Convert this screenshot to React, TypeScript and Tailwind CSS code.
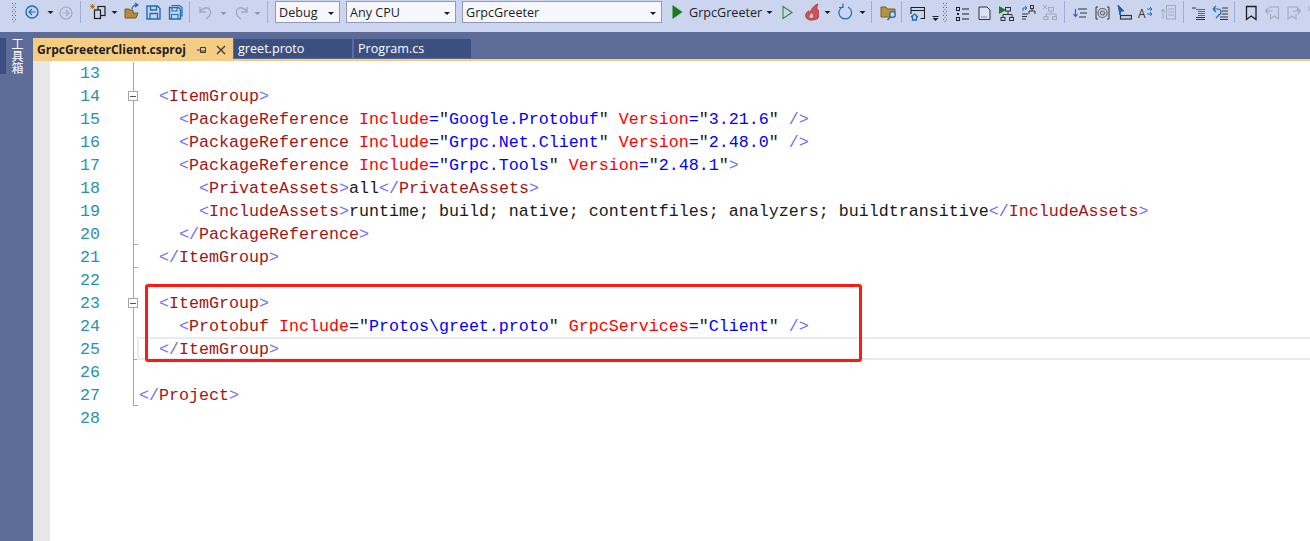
import React from "react";

const S = ({ w, className = "", children }: { w: number; className?: string; children?: React.ReactNode }) => (
  <svg width={w} height={32} viewBox={`0 0 ${w} 32`} fill="none" className={"shrink-0 block " + className}>
    {children}
  </svg>
);
const Sep = ({ className = "" }: { className?: string }) => <div className={"w-px h-[22px] mt-[-8px] bg-[#9fb0d4] shrink-0 " + className} />;
const Grip = ({ className = "" }: { className?: string }) => (
  <S w={5} className={className}>
    {[3, 7, 11, 15, 19].map((y) => (
      <g key={y} fill="#5a6478">
        <rect x={0} y={y} width={1} height={1} />
        <rect x={3} y={y} width={1} height={1} />
        <rect x={1.5} y={y + 2} width={1} height={1} />
      </g>
    ))}
  </S>
);
const Caret = ({ className = "" }: { className?: string }) => (
  <S w={7} className={className}>
    <path d="M0.5 11h6l-3 3z" fill="#1e1e1e" />
  </S>
);
const CaretOff = ({ className = "" }: { className?: string }) => (
  <S w={7} className={className}>
    <path d="M0.5 12h6l-3 3z" fill="#8d94a8" />
  </S>
);

type Seg = [string, string];
const t = "text-[#6e6eff]";
const n = "text-[#a31515]";
const a = "text-[#ff0000]";
const q = "text-[#0000ff]";
const k = "text-[#1a1a1a]";
const tag = (s: string): Seg[] => [[t, "<"], [n, s]];
const attr = (name: string, val: string): Seg[] => [[n, " "], [a, name], [q, "="], [k, "\""], [q, val], [k, "\""]];

const rows: { no: number; seg?: Seg[]; box?: boolean; tick?: boolean; end?: boolean; cur?: boolean; noLine?: boolean }[] = [
  { no: 13 },
  { no: 14, box: true, seg: [[k, "  "], ...tag("ItemGroup"), [t, ">"]] },
  { no: 15, seg: [[k, "    "], ...tag("PackageReference"), ...attr("Include", "Google.Protobuf"), ...attr("Version", "3.21.6"), [k, " "], [t, "/>"]] },
  { no: 16, seg: [[k, "    "], ...tag("PackageReference"), ...attr("Include", "Grpc.Net.Client"), ...attr("Version", "2.48.0"), [k, " "], [t, "/>"]] },
  { no: 17, seg: [[k, "    "], ...tag("PackageReference"), ...attr("Include", "Grpc.Tools"), ...attr("Version", "2.48.1"), [t, ">"]] },
  { no: 18, seg: [[k, "      "], ...tag("PrivateAssets"), [t, ">"], [k, "all"], [t, "</"], [n, "PrivateAssets"], [t, ">"]] },
  { no: 19, seg: [[k, "      "], ...tag("IncludeAssets"), [t, ">"], [k, "runtime; build; native; contentfiles; analyzers; buildtransitive"], [t, "</"], [n, "IncludeAssets"], [t, ">"]] },
  { no: 20, tick: true, seg: [[k, "    "], [t, "</"], [n, "PackageReference"], [t, ">"]] },
  { no: 21, tick: true, seg: [[k, "  "], [t, "</"], [n, "ItemGroup"], [t, ">"]] },
  { no: 22 },
  { no: 23, box: true, seg: [[k, "  "], ...tag("ItemGroup"), [t, ">"]] },
  { no: 24, seg: [[k, "    "], ...tag("Protobuf"), ...attr("Include", "Protos\\greet.proto"), ...attr("GrpcServices", "Client"), [k, " "], [t, "/>"]] },
  { no: 25, tick: true, cur: true, seg: [[k, "  "], [t, "</"], [n, "ItemGroup"], [t, ">"]] },
  { no: 26 },
  { no: 27, tick: true, end: true, seg: [[t, "</"], [n, "Project"], [t, ">"]] },
  { no: 28, noLine: true },
];

const Combo = ({ label, className }: { label: string; className: string }) => (
  <div className={"h-[22px] mt-[-8px] shrink-0 bg-[#f5f7fd] border border-[#8e9ab8] flex items-center justify-between pl-[3px] pr-[5px] " + className}>
    <span className="mt-[2px]">{label}</span>
    <span className="w-0 h-0 mt-[2px] border-x-[3px] border-x-transparent border-t-[3px] border-t-[#1e1e1e]" />
  </div>
);

export default function App() {
  return (
    <div className="w-[1310px] h-[541px] overflow-hidden flex flex-col bg-white font-['Open_Sans','Noto_Sans',sans-serif] text-[12.6px] text-[#1e1e1e]">
      {/* toolbar */}
      <div className="h-8 bg-[#ccd5f0] flex items-center shrink-0 pl-3 overflow-hidden">
        <Grip />
        <S w={14} className="ml-[8px]">
          <circle cx="7" cy="12" r="6" stroke="#1e6cb8" strokeWidth="1.4" />
          <path d="M10.5 12h-6M7 9l-3 3 3 3" stroke="#1e6cb8" strokeWidth="1.2" />
        </S>
        <Caret className="ml-[8px]" />
        <S w={14} className="ml-[5px]">
          <circle cx="7" cy="13" r="6" stroke="#a3a9ba" strokeWidth="1.2" />
          <path d="M3.5 13h6M7 10l3 3-3 3" stroke="#a3a9ba" strokeWidth="1.1" />
        </S>
        <Sep className="ml-[7px]" />
        <S w={17} className="ml-[8px]">
          <path d="M1 6.500h5M3.500 4v5M1.500 4.500l4 4M5.500 4.500l-4 4" stroke="#a5762a" strokeWidth="0.9" />
          <rect x="9" y="6.500" width="7" height="9" stroke="#1e1e1e" strokeWidth="1.2" fill="#ccd5f0" />
          <rect x="5.500" y="10" width="6" height="8.500" stroke="#1e1e1e" strokeWidth="1.2" fill="#ccd5f0" />
        </S>
        <Caret className="ml-[5px]" />
        <S w={15} className="ml-[6px]">
          <path d="M1 18V9h4l1 1h3v3h5l-2 5z" fill="#b58a3c" stroke="#7a5a1c" strokeWidth="1" />
          <path d="M8 9c0-2 2-4 5-4M11 3l3 2-3 2" stroke="#1e6cb8" strokeWidth="1.3" />
        </S>
        <S w={15} className="ml-[7px]">
          <path d="M1 6h10.500l2.500 2.500v10.500h-13z" stroke="#1e6cb8" strokeWidth="1.4" />
          <path d="M4.500 6v4h6v-4M4 19v-5.500h7.500v5.500" stroke="#1e6cb8" strokeWidth="1.3" />
        </S>
        <S w={15} className="ml-[7px]">
          <path d="M3.500 5.500h8l2.500 2v8.500h-2" stroke="#1e6cb8" strokeWidth="1.2" />
          <path d="M1.500 7.500h9l2 2v9.500h-11z" stroke="#1e6cb8" strokeWidth="1.4" />
          <path d="M4 8v3h5v-3M3.500 19v-4.500h6.500v4.500" stroke="#1e6cb8" strokeWidth="1.1" />
        </S>
        <Sep className="ml-[6px]" />
        <S w={15} className="ml-[8px]">
          <path d="M2 7v5h6M2 12c2-4 8-6 10-2s-1 7-4 9" stroke="#a3a9ba" strokeWidth="1.4" />
        </S>
        <CaretOff className="ml-[7px]" />
        <S w={15} className="ml-[7px]">
          <path d="M13 7v5h-6M13 12c-2-4-8-6-10-2s1 7 4 9" stroke="#a3a9ba" strokeWidth="1.4" />
        </S>
        <CaretOff className="ml-[5px]" />
        <Sep className="ml-[6px]" />
        {/* combos */}
        <Combo label="Debug" className="ml-[7px] w-[65px]" />
        <Combo label="Any CPU" className="ml-[6px] w-[110px]" />
        <Combo label="GrpcGreeter" className="ml-[6px] w-[200px]" />
        <S w={11} className="ml-[10px]">
          <path d="M0.500 5l10 7-10 7z" fill="#1e7a1e" />
        </S>
        <span className="ml-[6px] w-[73px] shrink-0 mt-[-5px]">GrpcGreeter</span>
        <Caret className="ml-[4px]" />
        <S w={11} className="ml-[9px]">
          <path d="M1 6.500l9 6-9 6z" stroke="#2f8a3a" strokeWidth="1.1" />
        </S>
        <S w={15} className="ml-[11px]">
          <path d="M7 20c-4 0-6-3-5-6 1-2 2-3 3-3 0 1 0 2 1 2 1-3 3-7 8-9-1 2-2 5 0 6 2 2 1.500 6 0 8-1 1.500-4 2-7 2z" fill="#c4555f" stroke="#b53a2a" strokeWidth="1" />
          <path d="M7 18c-2 0-2-3 1-5 0 2 2 2 1 4z" fill="#f0c8c8" />
        </S>
        <Caret className="ml-[5px]" />
        <S w={15} className="ml-[7px]">
          <path d="M4.500 7a6.300 6.300 0 1 0 5.500 0M5 3.500v4h-4" stroke="#1e6cb8" strokeWidth="1.200" />
        </S>
        <Caret className="ml-[6px]" />
        <Sep className="ml-[5px]" />
        <S w={17} className="ml-[8px]">
          <path d="M1 17V7h5l1 2h8v8z" fill="#b5933f" stroke="#7a5e1c" strokeWidth="1" />
          <circle cx="12.500" cy="14.500" r="2.800" fill="#ccd5f0" stroke="#1e6cb8" strokeWidth="1.200" />
          <path d="M10.500 17l-3 3" stroke="#1e6cb8" strokeWidth="1.500" />
        </S>
        <Sep className="ml-[4px]" />
        <S w={15} className="ml-[8px]">
          <path d="M1 14V7.500h13.500v11h-4M1 10.500h13.500" stroke="#1e1e1e" strokeWidth="1.100" />
          <path d="M1 17l3.500-3 3.500 3M2.500 16v4h4v-4" stroke="#1e6cb8" strokeWidth="1.300" />
        </S>
        <S w={7} className="ml-[7px]">
          <path d="M0.500 18h6l-3 3z" fill="#1e1e1e" />
          <path d="M0.500 16.500h6" stroke="#1e1e1e" strokeWidth="1" />
        </S>
        <Grip className="ml-[4px]" />
        <S w={14} className="ml-[7px]">
          <rect x="1.500" y="7.500" width="3" height="3" stroke="#1e1e1e" />
          <path d="M7 9h7M7 14h7M7 19h7" stroke="#1e1e1e" strokeWidth="1.100" />
          <rect x="1.500" y="17.500" width="3" height="3" stroke="#1e1e1e" />
          <rect x="2" y="13" width="2" height="2" fill="#1e1e1e" />
        </S>
        <S w={13} className="ml-[9px]">
          <path d="M1 7h8l3 3v9.500h-11z" fill="#dde2f2" stroke="#333" strokeWidth="1" />
          <path d="M3.500 17h6" stroke="#333" strokeDasharray="1 1" />
        </S>
        <S w={17} className="ml-[7px]">
          <path d="M1 6l7 4-7 4z" fill="#1e7a1e" />
          <path d="M5 17v-2.500h9v3M10 11v3.500" stroke="#333" />
          <rect x="7.500" y="7.500" width="5" height="3.500" stroke="#333" />
          <rect x="3" y="17.500" width="4" height="3" stroke="#333" />
          <rect x="11.500" y="17.500" width="4" height="3" stroke="#333" />
        </S>
        <S w={16} className="ml-[6px]">
          <path d="M1 14h6M1 16.500h5M1 19h4" stroke="#333" />
          <path d="M2 11V8h3M4 6l2 2-2 2" stroke="#1e6cb8" />
          <rect x="9.500" y="5.500" width="3" height="3" stroke="#333" />
          <path d="M11 9v2M8 14v-3h6v3" stroke="#333" />
        </S>
        <S w={15} className="ml-[5px]">
          <g stroke="#a3a9ba">
            <path d="M1 5l4 4M5 5l-4 4" />
            <rect x="6.500" y="7.500" width="5" height="3.500" />
            <path d="M9 11v3M4 16v-2h10v2" />
            <rect x="2" y="16.500" width="4" height="3" />
            <rect x="10.500" y="16.500" width="4" height="3" />
          </g>
        </S>
        <Sep className="ml-[7px]" />
        <S w={14} className="ml-[8px]">
          <path d="M5 9h9M7 13h7M6 17h7" stroke="#333" strokeWidth="1" />
          <path d="M2.500 9v7M0.500 14l2 2.500 2-2.500" stroke="#1e6cb8" strokeWidth="1.200" />
        </S>
        <S w={15} className="ml-[8px]">
          <path d="M3 7H1v12h2M12 7h2v12h-2" stroke="#333" />
          <circle cx="7.500" cy="13" r="4.500" stroke="#666" strokeWidth="1.200" />
          <circle cx="7.500" cy="13" r="2" stroke="#666" strokeWidth="1.200" />
        </S>
        <S w={15} className="ml-[7px]">
          <path d="M1 5l6 6H4l-1 4z" fill="#1e5fb0" stroke="#1e5fb0" />
          <rect x="3.500" y="15.500" width="11" height="3.500" stroke="#333" strokeWidth="1.200" />
        </S>
        <S w={15} className="ml-[6px]">
          <text x="0" y="18" fontSize="12" fill="#333" fontFamily="'Open Sans'">A</text>
          <path d="M9 9h5M12 7l2 2-2 2M9 14h5M12 12l2 2-2 2" stroke="#1e6cb8" strokeWidth="1" />
        </S>
        <S w={15} className="ml-[8px]">
          <g stroke="#a3a9ba">
            <path d="M2 19v-9M0 12l2-3 2 3" />
            <rect x="5.500" y="5.500" width="9" height="13.500" />
            <path d="M7 9h6M7 12h6M7 15h6" />
          </g>
        </S>
        <Sep className="ml-[7px]" />
        <S w={14} className="ml-[8px]">
          <path d="M0 8h4" stroke="#333" />
          <path d="M4 9.500h9M6 11.500h7M6 13.500h7M6 15.500h7" stroke="#2f8a3a" />
          <path d="M4 17.500h9M4 19.500h9" stroke="#333" />
        </S>
        <S w={16} className="ml-[6px]">
          <path d="M1 9h5a3 3 0 0 1 0 6M1 9l3-3M1 9l3 3M4 18l3-3" stroke="#1e6cb8" strokeWidth="1.200" />
          <path d="M10 8h6M10 11h6M10 14h6M8 17h8M8 19.500h8" stroke="#333" />
        </S>
        <Sep className="ml-[6px]" />
        <S w={13} className="ml-[10px]">
          <path d="M1.500 6.500h9.500v13l-4.750-3.500-4.750 3.500z" stroke="#1e1e1e" strokeWidth="1.300" />
        </S>
        <S w={15} className="ml-[7px]">
          <path d="M4 7h9.500v12l-4-3-4 3v-5M0.500 11h7M3.500 8l-3 3 3 3" stroke="#a3a9ba" strokeWidth="1.100" />
        </S>
        <S w={15} className="ml-[6px]">
          <path d="M2 7h9.500v4M2 7v12l4-3 4 3v-5M7 11h7.500M11.500 8l3 3-3 3" stroke="#a3a9ba" strokeWidth="1.100" />
        </S>
        <S w={6} className="ml-[6px]">
          <path d="M0.500 6l5 5M5.500 6l-5 5" stroke="#a3a9ba" />
        </S>
      </div>

      {/* body */}
      <div className="flex-1 flex min-h-0">
        {/* tool rail */}
        <div className="w-[33px] shrink-0 bg-[#5d6b99] pt-[6px] flex">
          <div className="w-[6px] h-[36px] bg-[#3b4f81]" />
          <div className="ml-[4px] text-white text-[12px] leading-[14px] [writing-mode:vertical-rl] font-['Noto_Sans_CJK_SC',sans-serif]">工具箱</div>
        </div>
        {/* document */}
        <div className="flex-1 flex flex-col min-w-0">
          <div className="h-[29px] shrink-0 bg-[#5d6b99] flex items-end border-b-2 border-[#f5cc84]">
            <div className="w-[200px] h-[23px] mb-[-2px] bg-[#f5cc84] flex items-center pl-[4px] font-bold text-[#1e1e1e] text-[12px]">
              <span>GrpcGreeterClient.csproj</span>
              <svg width="10" height="10" viewBox="0 0 10 10" className="ml-[11px] mt-[1px]" fill="none">
                <path d="M0 5h3M3.500 2.500v5M3.500 2.500h5v5h-5M3.500 6h5" stroke="#3a3a3a" />
              </svg>
              <svg width="10" height="10" viewBox="0 0 10 10" className="ml-[9px] mt-[1px]" fill="none">
                <path d="M1 1l8 8M9 1l-8 8" stroke="#3a3a3a" strokeWidth="1.300" />
              </svg>
            </div>
            <div className="ml-px w-[118px] h-[19px] mb-[1px] bg-[#3b4f81] text-white pl-[4px] flex items-center leading-none">
              <span className="mt-[1px]">greet.proto</span>
            </div>
            <div className="ml-[2px] w-[117px] h-[19px] mb-[1px] bg-[#3b4f81] text-white pl-[4px] flex items-center leading-none">
              <span className="mt-[1px]">Program.cs</span>
            </div>
          </div>
          <div className="flex-1 flex relative min-h-0">
            <div className="w-[17px] shrink-0 bg-[#e6e7e8]" />
            <div className="flex-1 pt-px min-w-0 font-['Liberation_Mono',monospace] text-[16.67px] leading-[23px]">
              {rows.map((r) => (
                <div key={r.no} className="flex h-[23px]">
                  <div className="w-[50px] shrink-0 text-right text-[#2b91af]">{r.no}</div>
                  <div className="relative w-[37px] shrink-0">
                    {!r.noLine && (
                      <div className={"absolute left-[33px] top-0 w-px bg-[#a5a5a5] " + (r.end ? "h-[22px]" : "h-[23px]")} />
                    )}
                    {r.tick && <div className="absolute left-[33px] top-[21px] w-[5px] h-px bg-[#a5a5a5]" />}
                    {r.box && (
                      <div className="absolute left-[28px] top-[6px] w-[10px] h-[10px] bg-white border border-[#a5a5a5] flex items-center justify-center">
                        <div className="w-[6px] h-px bg-[#555]" />
                      </div>
                    )}
                  </div>
                  <div className="relative flex-1 min-w-0 whitespace-pre pl-[2px]">
                    {r.cur && <div className="absolute left-0 right-0 top-[-1px] h-[23px] border-2 border-r-0 border-[#eaeaf2]" />}
                    <span className="relative">
                      {r.seg?.map((s, i) => (
                        <span key={i} className={s[0]}>{s[1]}</span>
                      ))}
                    </span>
                  </div>
                </div>
              ))}
            </div>
            {/* red annotation */}
            <div className="absolute left-[112px] top-[223px] w-[717px] h-[78px] border-[3px] border-[#ff1a14] rounded-[3px] pointer-events-none" />
          </div>
        </div>
      </div>
    </div>
  );
}
